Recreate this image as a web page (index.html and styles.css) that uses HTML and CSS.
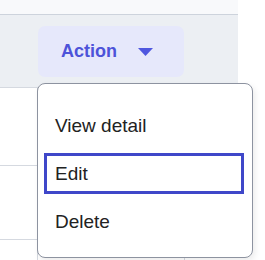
FILE: index.html
```html
<!DOCTYPE html>
<html lang="en">

<head>
    <meta charset="UTF-8">
    <meta name="viewport" content="width=device-width, initial-scale=1.0">
    <title>Action Menu</title>
    <link rel="stylesheet" href="styles.css">
</head>

<body>

    <div class="table">
        <div class="top-strip"></div>

        <div class="head-row">
            <div class="cell"></div>
            <div class="cell action-cell">
                <button class="action-btn" id="actionBtn">
                    <span>Action</span>
                    <svg class="caret" width="15" height="8" viewBox="0 0 15 8">
                        <path d="M0 0 H15 L7.5 8 Z" fill="#4f57df" />
                    </svg>
                </button>
            </div>
            <div class="cell"></div>
        </div>

        <div class="row row-first">
            <div class="cell"></div>
            <div class="cell bordered"></div>
            <div class="cell bordered"></div>
        </div>

        <div class="row row-second">
            <div class="cell"></div>
            <div class="cell bordered"></div>
            <div class="cell bordered"></div>
        </div>

        <div class="row row-last">
            <div class="cell"></div>
            <div class="cell bordered"></div>
            <div class="cell bordered"></div>
        </div>
    </div>

    <!-- Dropdown opened over the table -->
    <ul class="menu" id="actionMenu">
        <li class="menu-item">View detail</li>
        <li class="menu-item focused">Edit</li>
        <li class="menu-item">Delete</li>
    </ul>

</body>

</html>
```

FILE: styles.css
```css
* {
    box-sizing: border-box;
}

body {
    font-family: 'Liberation Sans', Arial, sans-serif;
    margin: 0;
    padding: 0;
    background-color: #fff;
    position: relative;
    height: 260px;
    overflow: hidden;
}

.table {
    width: 238px;
    height: 260px;
    overflow: hidden;
}

.top-strip {
    height: 15px;
    background-color: #f8f9fb;
    border-bottom: 1px solid #cdd3dc;
}

.head-row,
.row {
    display: grid;
    grid-template-columns: 37px 147px 1fr;
}

.head-row {
    height: 73px;
    background-color: #eceff3;
    border-bottom: 1px solid #d5d9e0;
}

.row {
    border-bottom: 1px solid #d5d9e0;
}

.row-first {
    height: 78px;
}

.row-second {
    height: 74px;
}

.row-last {
    height: 20px;
    border-bottom: 0;
}

.bordered {
    border-left: 1px solid #d5d9e0;
}

.action-cell {
    padding: 11px 0 0 1px;
}

.action-btn {
    display: flex;
    align-items: center;
    width: 146px;
    height: 51px;
    padding: 0 0 0 23px;
    border: 0;
    border-radius: 7px;
    background-color: #e6e8fb;
    color: #4d53d9;
    font-family: 'Liberation Sans', Arial, sans-serif;
    font-size: 18px;
    font-weight: 700;
    cursor: pointer;
}

.caret {
    margin-left: 21px;
    margin-top: 1px;
}

.menu {
    position: absolute;
    left: 37px;
    top: 83px;
    width: 216px;
    height: 175px;
    margin: 0;
    padding: 21px 0 0;
    list-style: none;
    background-color: #fff;
    border: 1px solid #8d93a0;
    border-radius: 8px;
    box-shadow: 2px 3px 6px rgba(0, 0, 0, 0.08);
    display: flex;
    flex-direction: column;
    gap: 7px;
}

.menu-item {
    display: flex;
    align-items: center;
    height: 41px;
    margin: 0 8px 0 6px;
    padding: 0 8px;
    border: 3px solid transparent;
    color: #222;
    font-size: 19px;
    cursor: pointer;
}

.menu-item.focused {
    border-color: #3f47c9;
}
```
